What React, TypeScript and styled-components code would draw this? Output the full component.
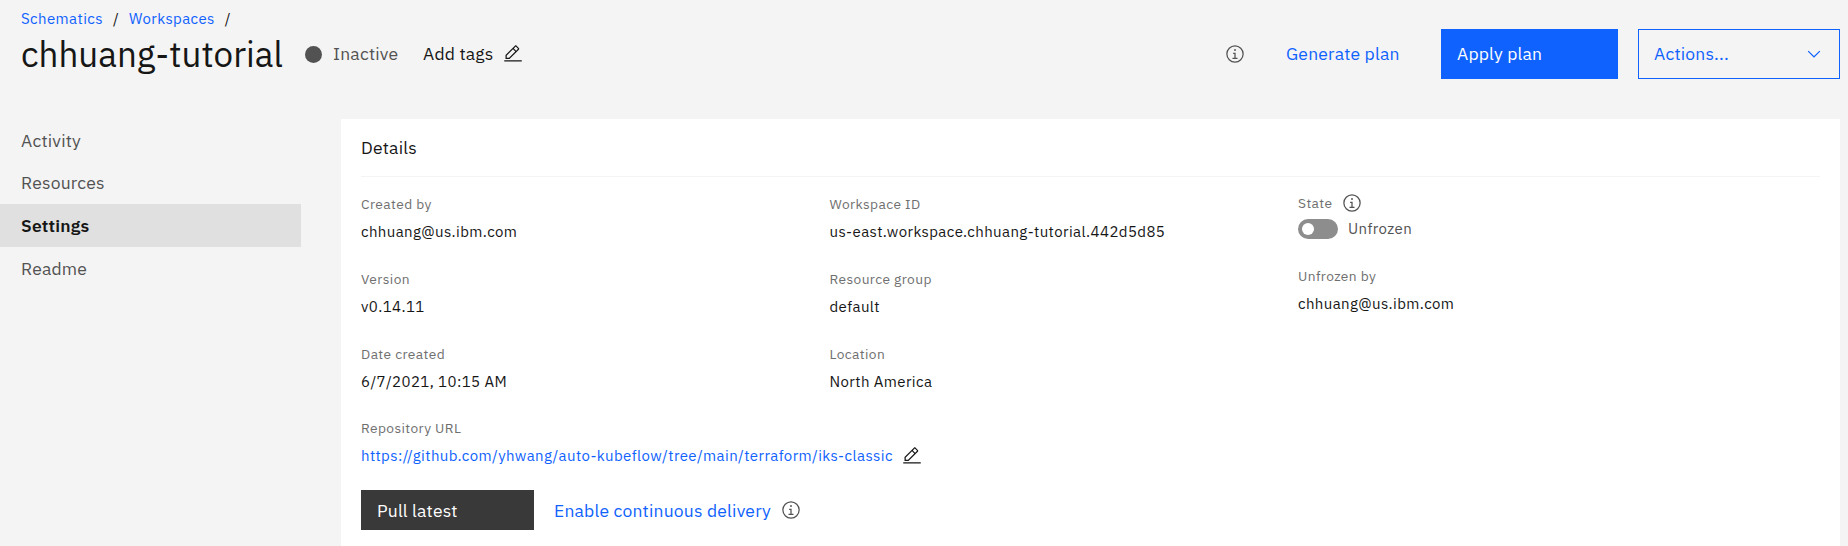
import React from "react";
import styled, { createGlobalStyle, css } from "styled-components";

const color = {
  page: "#f4f4f4",
  text: "#161616",
  secondary: "#525252",
  label: "#6f6f6f",
  link: "#0f62fe",
  selected: "#e0e0e0",
  dark: "#393939",
  toggleOff: "#8d8d8d",
};

const GlobalStyle = createGlobalStyle`
  * { box-sizing: border-box; }
  body {
    margin: 0;
    background: ${color.page};
    color: ${color.text};
    font-family: "IBM Plex Sans", Roboto, "Liberation Sans", sans-serif;
    font-size: 17.5px;
    letter-spacing: 0.2px;
    white-space: nowrap;
    overflow: hidden;
  }
`;

const Page = styled.div`
  display: flex;
  flex-direction: column;
  height: 546px;
  overflow: hidden;
`;

const Header = styled.header`
  height: 118px;
  padding: 9px 8px 0 21px;
`;

const Breadcrumb = styled.nav`
  display: flex;
  height: 20px;
  font-size: 15px;
  line-height: 19px;
  letter-spacing: 0.4px;
`;

const Crumb = styled.a`
  color: ${color.link};
`;

const Slash = styled.span`
  width: 16px;
  margin-left: 10px;
`;

const TitleBar = styled.div`
  display: flex;
  justify-content: space-between;
  align-items: center;
  height: 50px;
`;

const Cluster = styled.div`
  display: flex;
  align-items: center;
`;

const Title = styled.h1`
  width: 284px;
  margin: 0;
  font-size: 35px;
  font-weight: 400;
  line-height: 46px;
  letter-spacing: 0;
`;

const StatusDot = styled.span`
  width: 17px;
  height: 17px;
  border-radius: 50%;
  background: ${color.secondary};
`;

const StatusText = styled.span`
  width: 90px;
  margin-left: 11px;
  padding-bottom: 1px;
  color: ${color.secondary};
`;

const AddTags = styled.span`
  width: 80px;
  padding-bottom: 1px;
`;

const Icon = styled.svg<{ $color?: string }>`
  display: block;
  flex: none;
  width: 20px;
  height: 20px;
  fill: ${({ $color }) => $color ?? color.secondary};
`;

const Button = styled.button<{ $kind: "ghost" | "primary" | "outline" | "dark" }>`
  display: flex;
  align-items: center;
  justify-content: space-between;
  height: 50px;
  padding: 0 15px;
  border: 1px solid transparent;
  background: transparent;
  color: ${color.link};
  font: inherit;
  letter-spacing: inherit;

  ${({ $kind }) =>
    $kind === "ghost" &&
    css`
      width: 196px;
      padding-left: 40px;
    `}
  ${({ $kind }) =>
    $kind === "primary" &&
    css`
      width: 177px;
      background: ${color.link};
      border-color: ${color.link};
      color: #fff;
    `}
  ${({ $kind }) =>
    $kind === "outline" &&
    css`
      width: 202px;
      margin-left: 20px;
      border-color: ${color.link};
    `}
  ${({ $kind }) =>
    $kind === "dark" &&
    css`
      width: 173px;
      height: 40px;
      background: ${color.dark};
      border-color: ${color.dark};
      color: #fff;
    `}
`;

const ButtonText = styled.span<{ $low?: boolean }>`
  padding: ${({ $low }) => ($low ? "1px 0 0" : "0 0 1px")};
`;

const Body = styled.div`
  display: flex;
  flex: 1;
  padding-right: 8px;
`;

const SideNav = styled.nav`
  width: 301px;
  margin-right: 40px;
`;

const NavItem = styled.a<{ $active?: boolean }>`
  display: flex;
  align-items: center;
  height: 43px;
  padding-left: 21px;
  color: ${({ $active }) => ($active ? color.text : color.secondary)};
  font-weight: ${({ $active }) => ($active ? 600 : 400)};
  background: ${({ $active }) => ($active ? color.selected : "transparent")};

  &:first-child {
    padding-top: 2px;
  }
`;

const Card = styled.main`
  flex: 1;
  margin-top: 1px;
  padding: 0 20px;
  background: #fff;
`;

const CardTitle = styled.h2`
  height: 58px;
  margin: 0;
  border-bottom: 1px solid ${color.page};
  font-size: 17.5px;
  font-weight: 400;
  line-height: 57px;
`;

const Columns = styled.div`
  display: grid;
  grid-template-columns: 468.5px 468.5px 1fr;
  padding-top: 17px;
`;

const Column = styled.div<{ $raised?: boolean }>`
  display: flex;
  flex-direction: column;
  gap: 27px;
  margin-top: ${({ $raised }) => ($raised ? -1 : 0)}px;
`;

const FieldBox = styled.div<{ $gap?: number }>`
  display: flex;
  flex-direction: column;
  gap: ${({ $gap = 8 }) => $gap}px;
  letter-spacing: 0.4px;
`;

const Label = styled.span`
  color: ${color.label};
  font-size: 13.75px;
  line-height: 20px;
`;

const Value = styled.span<{ $tone?: string }>`
  padding-bottom: 1px;
  color: ${({ $tone }) => $tone ?? color.text};
  font-size: 15px;
  line-height: 19px;
`;

const Inline = styled.div<{ $gap: number }>`
  display: flex;
  align-items: center;
  height: 20px;
  gap: ${({ $gap }) => $gap}px;
`;

const Toggle = styled.span`
  display: flex;
  align-items: center;
  width: 40px;
  height: 20px;
  padding-left: 4px;
  border-radius: 10px;
  background: ${color.toggleOff};
`;

const Knob = styled.span`
  width: 12px;
  height: 12px;
  border-radius: 50%;
  background: #fff;
`;

const Repository = styled.section`
  margin-top: 26px;
`;

const Actions = styled.div`
  display: flex;
  align-items: center;
  margin-top: 24px;
`;

const DeliveryLink = styled.a`
  width: 227px;
  margin-left: 20px;
  padding-top: 1px;
  color: ${color.link};
`;

const InfoIcon = () => (
  <Icon viewBox="0 0 32 32">
    <path d="M17 22V14H13v2h2v6H12v2h8V22zM16 8a1.5 1.5 0 1 0 1.5 1.5A1.5 1.5 0 0 0 16 8z" />
    <path d="M16 30A14 14 0 1 1 30 16 14 14 0 0 1 16 30zM16 4A12 12 0 1 0 28 16 12 12 0 0 0 16 4z" />
  </Icon>
);

const EditIcon = () => (
  <Icon viewBox="0 0 32 32" $color={color.text}>
    <path d="M2 26H30V28H2zM25.4 9c.8-.8.8-2 0-2.8l-3.6-3.6c-.8-.8-2-.8-2.8 0l-15 15V24h6.4L25.4 9zM20.4 4L24 7.6l-3 3L17.4 7 20.4 4zM6 22v-3.6l10-10 3.6 3.6-10 10H6z" />
  </Icon>
);

const ChevronIcon = () => (
  <Icon viewBox="0 0 16 16" $color={color.link}>
    <path d="M8 11L3 6l.7-.7L8 9.6l4.3-4.3.7.7z" />
  </Icon>
);

type FieldData = { label: string; value: string };

const Field = ({ label, value }: FieldData) => (
  <FieldBox>
    <Label>{label}</Label>
    <Value>{value}</Value>
  </FieldBox>
);

const navItems = ["Activity", "Resources", "Settings", "Readme"];

const general: FieldData[] = [
  { label: "Created by", value: "chhuang@us.ibm.com" },
  { label: "Version", value: "v0.14.11" },
  { label: "Date created", value: "6/7/2021, 10:15 AM" },
];

const placement: FieldData[] = [
  { label: "Workspace ID", value: "us-east.workspace.chhuang-tutorial.442d5d85" },
  { label: "Resource group", value: "default" },
  { label: "Location", value: "North America" },
];

export default function App() {
  return (
    <>
      <GlobalStyle />
      <Page>
        <Header>
          <Breadcrumb>
            <Crumb>Schematics</Crumb>
            <Slash>/</Slash>
            <Crumb>Workspaces</Crumb>
            <Slash>/</Slash>
          </Breadcrumb>
          <TitleBar>
            <Cluster>
              <Title>chhuang-tutorial</Title>
              <StatusDot />
              <StatusText>Inactive</StatusText>
              <AddTags>Add tags</AddTags>
              <EditIcon />
            </Cluster>
            <Cluster>
              <InfoIcon />
              <Button $kind="ghost">
                <ButtonText>Generate plan</ButtonText>
              </Button>
              <Button $kind="primary">
                <ButtonText>Apply plan</ButtonText>
              </Button>
              <Button $kind="outline">
                <ButtonText>Actions...</ButtonText>
                <ChevronIcon />
              </Button>
            </Cluster>
          </TitleBar>
        </Header>
        <Body>
          <SideNav>
            {navItems.map((name) => (
              <NavItem key={name} $active={name === "Settings"}>
                {name}
              </NavItem>
            ))}
          </SideNav>
          <Card>
            <CardTitle>Details</CardTitle>
            <Columns>
              <Column>
                {general.map((field) => (
                  <Field key={field.label} {...field} />
                ))}
              </Column>
              <Column>
                {placement.map((field) => (
                  <Field key={field.label} {...field} />
                ))}
              </Column>
              <Column $raised>
                <FieldBox $gap={6}>
                  <Inline $gap={10}>
                    <Label>State</Label>
                    <InfoIcon />
                  </Inline>
                  <Inline $gap={10}>
                    <Toggle>
                      <Knob />
                    </Toggle>
                    <Value $tone={color.secondary}>Unfrozen</Value>
                  </Inline>
                </FieldBox>
                <Field label="Unfrozen by" value="chhuang@us.ibm.com" />
              </Column>
            </Columns>
            <Repository>
              <FieldBox>
                <Label>Repository URL</Label>
                <Inline $gap={9}>
                  <Value $tone={color.link}>
                    https://github.com/yhwang/auto-kubeflow/tree/main/terraform/iks-classic
                  </Value>
                  <EditIcon />
                </Inline>
              </FieldBox>
              <Actions>
                <Button $kind="dark">
                  <ButtonText $low>Pull latest</ButtonText>
                </Button>
                <DeliveryLink>Enable continuous delivery</DeliveryLink>
                <InfoIcon />
              </Actions>
            </Repository>
          </Card>
        </Body>
      </Page>
    </>
  );
}
